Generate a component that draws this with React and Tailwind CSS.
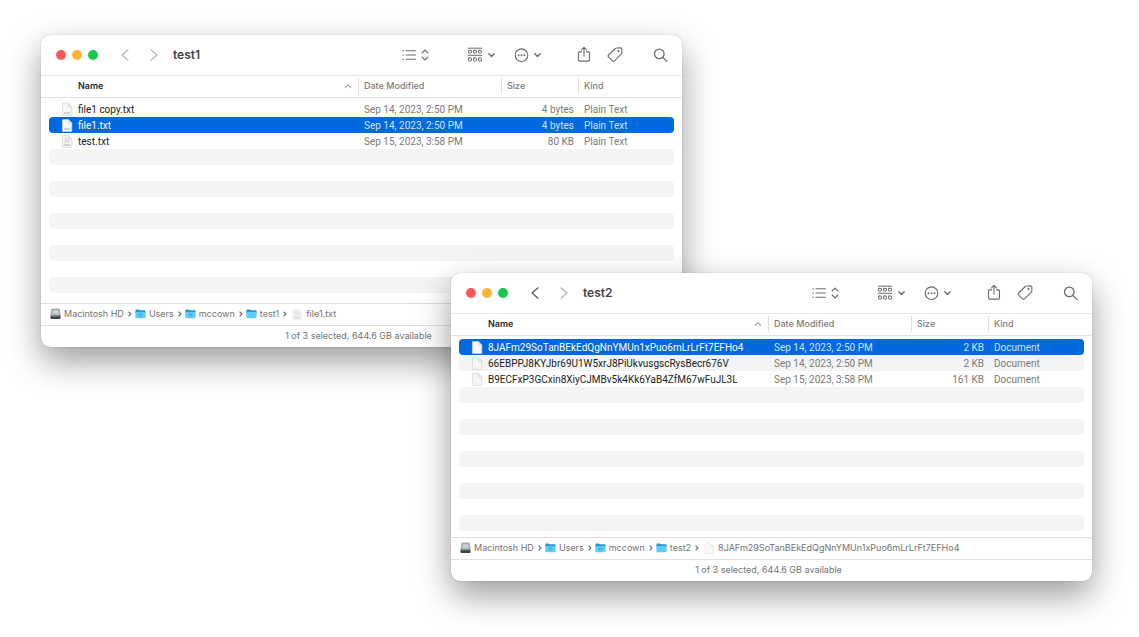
import React from "react";

const line = {
  fill: "none",
  stroke: "currentColor",
  strokeLinecap: "round",
  strokeLinejoin: "round",
  "aria-hidden": true,
};

function BackIcon() {
  return (
    <svg {...line} width="12" height="14" viewBox="0 0 12 14" strokeWidth="1.2">
      <path d="M9 1.8 3 7l6 5.2" />
    </svg>
  );
}

function ForwardIcon() {
  return (
    <svg {...line} width="12" height="14" viewBox="0 0 12 14" strokeWidth="1.2">
      <path d="M3 1.8 9 7l-6 5.2" />
    </svg>
  );
}

function ListIcon() {
  return (
    <svg {...line} width="14" height="12" viewBox="0 0 14 12" strokeWidth="1.1">
      <path d="M4 1.7h9.4M4 6h9.4M4 10.3h9.4" />
      <path d="M.8 1.7h.6M.8 6h.6M.8 10.3h.6" />
    </svg>
  );
}

function UpDownIcon() {
  return (
    <svg {...line} width="10" height="14" viewBox="0 0 10 14" strokeWidth="1.3">
      <path d="M2.2 4.9 5 2.1l2.8 2.8M2.2 9.1 5 11.9l2.8-2.8" />
    </svg>
  );
}

function DownIcon() {
  return (
    <svg {...line} width="9" height="8" viewBox="0 0 9 8" strokeWidth="1.4">
      <path d="M1.8 2.7 4.5 5.4l2.7-2.7" />
    </svg>
  );
}

function GroupIcon() {
  return (
    <svg {...line} width="16" height="16" viewBox="0 0 16 16" strokeWidth="1">
      <path d="M1.2 1.2h13.6M1.2 8.3h13.6" />
      <rect x="1.5" y="3.4" width="3" height="2.6" rx=".5" />
      <rect x="6.5" y="3.4" width="3" height="2.6" rx=".5" />
      <rect x="11.5" y="3.4" width="3" height="2.6" rx=".5" />
      <rect x="1.5" y="11" width="3" height="3" rx=".5" />
      <rect x="6.5" y="11" width="3" height="3" rx=".5" />
      <rect x="11.5" y="11" width="3" height="3" rx=".5" />
    </svg>
  );
}

function MoreIcon() {
  return (
    <svg {...line} width="15" height="15" viewBox="0 0 15 15" strokeWidth="1.1">
      <circle cx="7.5" cy="7.2" r="6.3" />
      <g fill="currentColor" stroke="none">
        <circle cx="4.6" cy="7.2" r=".95" />
        <circle cx="7.5" cy="7.2" r=".95" />
        <circle cx="10.4" cy="7.2" r=".95" />
      </g>
    </svg>
  );
}

function ShareIcon() {
  return (
    <svg {...line} width="14" height="18" viewBox="0 0 14 18" strokeWidth="1.1">
      <path d="M4.6 5.9H2.5a1 1 0 0 0-1 1v7.2a1 1 0 0 0 1 1h9a1 1 0 0 0 1-1V6.9a1 1 0 0 0-1-1H9.4" />
      <path d="M7 10.2V1.5M4.5 3.8 7 1.3l2.5 2.5" />
    </svg>
  );
}

function TagIcon() {
  return (
    <svg {...line} width="16" height="16" viewBox="0 0 16 16" strokeWidth="1.1">
      <path d="M9.6 1 13.4.9q1.5 0 1.5 1.4l-.1 3.6q0 .7-.6 1.2L7.5 13.8q-1 .9-1.9 0L1.5 9.9q-.9-.9 0-1.9L8.3 1.5q.5-.5 1.3-.5Z" />
      <circle cx="11.5" cy="4.1" r=".5" />
    </svg>
  );
}

function SearchIcon() {
  return (
    <svg {...line} width="15" height="15" viewBox="0 0 15 15" strokeWidth="1.3">
      <circle cx="6.3" cy="5.9" r="4.8" />
      <path d="m9.9 9.5 4 3.9" />
    </svg>
  );
}

function SortIcon() {
  return (
    <svg {...line} width="8" height="6" viewBox="0 0 8 6" strokeWidth="1">
      <path d="M1.2 4.4 4 1.8l2.8 2.6" />
    </svg>
  );
}

function PathChevron() {
  return (
    <svg {...line} width="4" height="8" viewBox="0 0 4 8" strokeWidth="1.1" className="text-[#6e6e6e]">
      <path d="M.9 2 2.9 4 .9 6" />
    </svg>
  );
}

function FileIcon({ kind, small }) {
  return (
    <svg width={small ? 10 : 12} height={small ? 11 : 13} viewBox="0 0 12 13" aria-hidden="true" className="shrink-0">
      <path d="M2 .6h5.4l3.4 3.5V12a.6.6 0 0 1-.6.6H2a.6.6 0 0 1-.6-.6V1.2A.6.6 0 0 1 2 .6Z" fill="#f6f6f6" stroke="#d2d2d2" strokeWidth=".7" />
      <path d="M7.4.6v2.9a.6.6 0 0 0 .6.6h2.8Z" fill="#e8e8e8" stroke="#cfcfcf" strokeWidth=".5" />
      {kind === "lines" && <path d="M3.3 3.2h3M3.3 5.2h5.4M3.3 7.2h5.4" stroke="#c4c4c4" strokeWidth=".8" />}
      {kind !== "blank" && <path d="M3.5 10h1.4M5.5 10h1.2M7.3 10h1.4" stroke="#8a8a8a" strokeWidth="1.1" />}
    </svg>
  );
}

function DriveIcon() {
  return (
    <svg width="11" height="12" viewBox="0 0 11 12" aria-hidden="true">
      <path d="M1.9 1h7.2L10.300 8H.7Z" fill="#aebac0" stroke="#7d888e" strokeWidth=".6" />
      <path d="M3 2.3h5l.4 3.2H2.6Z" fill="#c9d3d8" />
      <rect x=".5" y="7.7" width="10" height="3.3" rx=".7" fill="#3d4448" />
      <path d="M1.5 8.3h8" stroke="#848c91" strokeWidth=".5" />
    </svg>
  );
}

function FolderIcon({ mark }) {
  return (
    <svg width="11" height="10" viewBox="0 0 11 10" aria-hidden="true">
      <path d="M.4 1.4q0-.8.8-.8h2.5q.4 0 .7.4l.4.3h5q.8 0 .8.8v2H.4Z" fill="#1d9bd0" />
      <path d="M.4 2.9h10.2v5.7q0 .7-.8.7H1.2q-.8 0-.8-.7Z" fill="#5fcbf8" />
      {mark === "users" && <path d="m4.1 5.3 1.4-.9 1.4.9v1.5l-1.4.9-1.4-.9Z" fill="none" stroke="#2d9fd4" strokeWidth=".8" />}
      {mark === "home" && <path d="M3.9 6 5.5 4.6 7.1 6M4.5 5.9v1.6M6.5 5.9v1.6" fill="none" stroke="#2d9fd4" strokeWidth=".8" />}
    </svg>
  );
}

function PathIcon({ type }) {
  if (type === "drive") return <DriveIcon />;
  if (type === "file") return <span className="pl-0.5 pr-px opacity-80"><FileIcon kind="lines" small /></span>;
  if (type === "blank") return <span className="pl-0.5 pr-px opacity-60"><FileIcon kind="blank" small /></span>;
  return <FolderIcon mark={type} />;
}

function Toolbar({ title, canGoBack }) {
  return (
    <header className="flex h-10 items-center pl-[15px] pr-3.5 text-[#6b6b6b]">
      <div className="flex gap-1.5">
        <button aria-label="Close" className="size-2.5 rounded-full bg-[#ff5759]" />
        <button aria-label="Minimize" className="size-2.5 rounded-full bg-[#ffb43c]" />
        <button aria-label="Zoom" className="size-2.5 rounded-full bg-[#1ac84b]" />
      </div>
      <div className="ml-[21px] flex gap-[17px] text-[#b4b4b4]">
        <button aria-label="Back" className={canGoBack ? "text-[#555555]" : ""}><BackIcon /></button>
        <button aria-label="Forward"><ForwardIcon /></button>
      </div>
      <h1 className="ml-[13px] text-[12px] font-semibold text-[#444444]">{title}</h1>
      <button aria-label="View as list" className="ml-auto flex items-center gap-1"><ListIcon /><UpDownIcon /></button>
      <button aria-label="Group items" className="ml-[37px] flex items-center gap-1"><GroupIcon /><DownIcon /></button>
      <button aria-label="More actions" className="ml-[18px] flex items-center gap-1"><MoreIcon /><DownIcon /></button>
      <button aria-label="Share" className="ml-[35px]"><ShareIcon /></button>
      <button aria-label="Edit tags" className="ml-4"><TagIcon /></button>
      <button aria-label="Search" className="ml-[30px]"><SearchIcon /></button>
    </header>
  );
}

function HeaderCell({ children }) {
  return (
    <th scope="col" className="border-b border-[#e2e2e2] p-0 pb-0.5 text-left font-medium text-[#7b7b7b]">
      <div className="flex h-4 items-center border-l border-[#dedede] pl-[5px]">{children}</div>
    </th>
  );
}

function FileRow({ file, index }) {
  const striped = index % 2 === 1;
  const band = file?.selected ? "bg-[#0168de]" : striped ? "bg-[#f3f5f5]" : "";
  const name = file?.selected ? "text-white" : "text-[#1c1c1c]";
  const detail = file?.selected ? "text-[#cfe3fb]" : "text-[#7b7b7b]";
  return (
    <tr className="h-4" aria-selected={!!file?.selected}>
      <td className="p-0" />
      <td className={`rounded-l p-0 pl-3 pt-px ${band} ${name}`}>
        {file && (
          <div className="flex items-center gap-1">
            <FileIcon kind={file.icon} />
            <span className="pl-px">{file.name}</span>
          </div>
        )}
      </td>
      <td className={`p-0 pl-1.5 pt-px ${band} ${detail}`}>{file?.date}</td>
      <td className={`p-0 pr-1 pt-px text-right ${band} ${detail}`}>{file?.size}</td>
      <td className={`rounded-r p-0 pl-1.5 pt-px ${band} ${detail}`}>{file?.kind}</td>
      <td className="p-0" />
    </tr>
  );
}

function FinderWindow({ title, canGoBack, files, path, place, listPadding }) {
  const rows = Array.from({ length: 12 }, (_, i) => files[i]);
  return (
    <section
      aria-label={title}
      className={`absolute w-[641px] overflow-hidden rounded-[9px] bg-white shadow-[0_0_1px_rgba(0,0,0,0.35),0_14px_34px_rgba(0,0,0,0.4)] ${place}`}
    >
      <Toolbar title={title} canGoBack={canGoBack} />
      <div className={`border-t border-[#e6e6e6] ${listPadding}`}>
        <table className="w-full table-fixed border-separate border-spacing-0">
          <colgroup>
            <col className="w-2" />
            <col className="w-[309px]" />
            <col className="w-[143px]" />
            <col className="w-[77px]" />
            <col />
            <col className="w-2" />
          </colgroup>
          <thead className="text-[9px] leading-4">
            <tr className="h-[22px]">
              <td className="border-b border-[#e2e2e2] p-0" />
              <th scope="col" aria-sort="ascending" className="border-b border-[#e2e2e2] p-0 pb-0.5 text-left font-semibold text-[#2a2a2a]">
                <div className="flex items-center justify-between pl-[29px] pr-1.5">
                  Name
                  <span className="text-[#777777]"><SortIcon /></span>
                </div>
              </th>
              <HeaderCell>Date Modified</HeaderCell>
              <HeaderCell>Size</HeaderCell>
              <HeaderCell>Kind</HeaderCell>
              <td className="border-b border-[#e2e2e2] p-0" />
            </tr>
          </thead>
          <tbody className="font-['Roboto','Liberation_Sans',sans-serif] text-[10px] leading-[15px] before:block before:h-[3px] before:content-['']">
            {rows.map((file, i) => <FileRow key={i} file={file} index={i} />)}
          </tbody>
        </table>
      </div>
      <nav aria-label="Path" className="border-t border-[#e0e0e0]">
        <ol className="flex h-[21px] items-center gap-[3px] pb-px pl-[9px] text-[9px] text-[#737373]">
          {path.map(([type, label], i) => (
            <li key={label} className="flex items-center gap-1">
              <button className="flex items-center gap-[3px]"><PathIcon type={type} />{label}</button>
              {i < path.length - 1 && <PathChevron />}
            </li>
          ))}
        </ol>
      </nav>
      <footer className="flex h-[22px] items-center justify-center border-t border-[#e0e0e0] pb-0.5 pr-1.5 text-[9px] text-[#737373]">
        1 of 3 selected, 644.6 GB available
      </footer>
    </section>
  );
}

const textFiles = [
  { name: "file1 copy.txt", date: "Sep 14, 2023, 2:50 PM", size: "4 bytes", kind: "Plain Text", icon: "txt" },
  { name: "file1.txt", date: "Sep 14, 2023, 2:50 PM", size: "4 bytes", kind: "Plain Text", icon: "txt", selected: true },
  { name: "test.txt", date: "Sep 15, 2023, 3:58 PM", size: "80 KB", kind: "Plain Text", icon: "lines" },
];

const documents = [
  { name: "8JAFm29SoTanBEkEdQgNnYMUn1xPuo6mLrLrFt7EFHo4", date: "Sep 14, 2023, 2:50 PM", size: "2 KB", kind: "Document", icon: "blank", selected: true },
  { name: "66EBPPJ8KYJbr69U1W5xrJ8PiUkvusgscRysBecr676V", date: "Sep 14, 2023, 2:50 PM", size: "2 KB", kind: "Document", icon: "blank" },
  { name: "B9ECFxP3GCxin8XiyCJMBv5k4Kk6YaB4ZfM67wFuJL3L", date: "Sep 15, 2023, 3:58 PM", size: "161 KB", kind: "Document", icon: "blank" },
];

const homePath = [["drive", "Macintosh HD"], ["users", "Users"], ["home", "mccown"]];

export default function App() {
  return (
    <main className="relative min-h-screen w-full overflow-hidden bg-white font-['Inter','Liberation_Sans',sans-serif]">
      <FinderWindow
        title="test1"
        files={textFiles}
        path={[...homePath, ["folder", "test1"], ["file", "file1.txt"]]}
        place="left-[41px] top-[35px]"
        listPadding="pb-2.5"
      />
      <FinderWindow
        title="test2"
        canGoBack
        files={documents}
        path={[...homePath, ["folder", "test2"], ["blank", "8JAFm29SoTanBEkEdQgNnYMUn1xPuo6mLrLrFt7EFHo4"]]}
        place="left-[451px] top-[273px]"
        listPadding="pb-1.5"
      />
    </main>
  );
}
